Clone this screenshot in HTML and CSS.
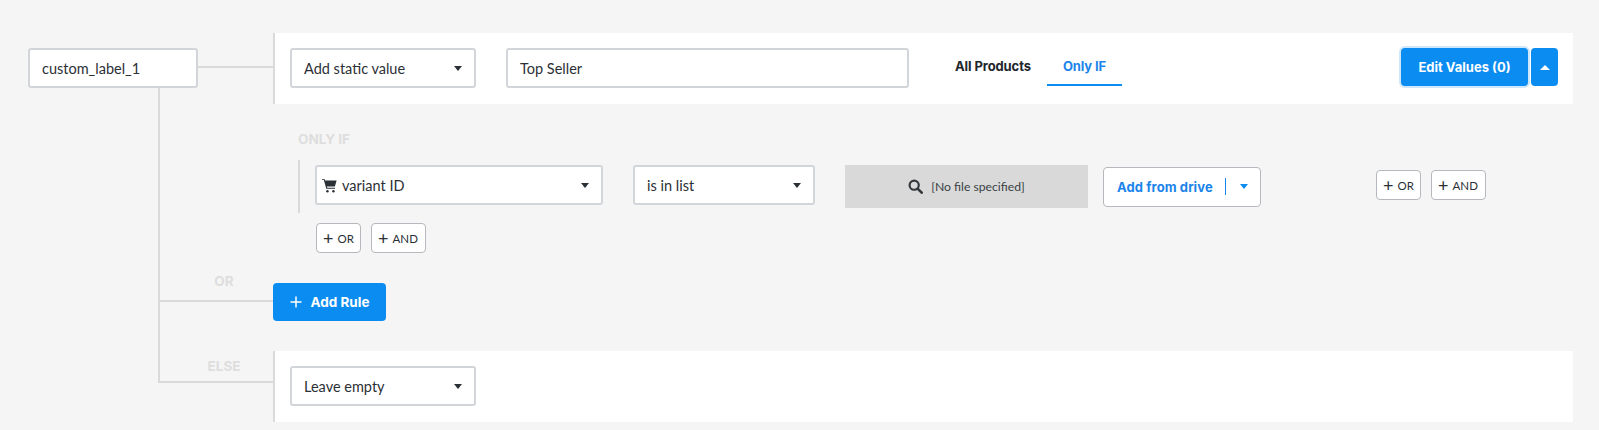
FILE: index.html
```html
<!DOCTYPE html>
<html lang="en">
<head>
<meta charset="utf-8">
<title>Rule editor</title>
<link rel="stylesheet" href="styles.css">
</head>
<body>
<main class="canvas">
  <div class="node">custom_label_1</div>
  <span class="wire wire-top"></span>
  <span class="wire wire-trunk"></span>
  <span class="wire wire-or"></span>
  <span class="wire wire-else"></span>
  <span class="side-label side-or">OR</span>
  <span class="side-label side-else">ELSE</span>

  <section class="band">
    <div class="select w-186"><span>Add static value</span><i class="caret"></i></div>
    <div class="input">Top Seller</div>
    <nav class="tabs">
      <a class="tab">All Products</a>
      <a class="tab tab-active">Only IF</a>
    </nav>
    <div class="actions">
      <button class="btn-edit">Edit Values (0)</button>
      <button class="btn-up"><i class="caret caret-up"></i></button>
    </div>
  </section>

  <section class="conditions">
    <h4 class="only-if">ONLY IF</h4>
    <div class="cond-row">
      <div class="select w-287">
        <span class="with-icon">
          <svg class="cart" viewBox="0 0 16 16" aria-hidden="true"><path d="M0 1.5h2.6l.7 1.8H15.6l-1.9 6.4H5.2l.4 1.3h8.3v1H4.6L1.9 2.5H0z"/><circle cx="5.8" cy="14.6" r="1.3"/><circle cx="12.2" cy="14.6" r="1.3"/></svg>
          variant ID
        </span>
        <i class="caret"></i>
      </div>
      <div class="select w-182"><span>is in list</span><i class="caret"></i></div>
      <div class="file">
        <svg class="search" viewBox="0 0 16 16" aria-hidden="true"><circle cx="6.6" cy="6.6" r="4.9" fill="none" stroke="currentColor" stroke-width="2.3"/><path d="M10.2 10.2l4.4 4.4" stroke="currentColor" stroke-width="2.8" stroke-linecap="round"/></svg>
        <span>[No file specified]</span>
      </div>
      <button class="btn-drive"><span>Add from drive</span><i class="divider"></i><i class="caret caret-blue"></i></button>
      <div class="logic logic-right">
        <button class="btn-logic w-or"><b>+</b>OR</button>
        <button class="btn-logic w-and"><b>+</b>AND</button>
      </div>
    </div>
    <div class="logic logic-below">
      <button class="btn-logic w-or"><b>+</b>OR</button>
      <button class="btn-logic w-and"><b>+</b>AND</button>
    </div>
  </section>

  <button class="btn-add">
    <svg class="plus" viewBox="0 0 12 12" aria-hidden="true"><path d="M6 .5v11M.5 6h11" stroke="currentColor" stroke-width="1.5" fill="none"/></svg>
    Add Rule
  </button>

  <section class="band band-else">
    <div class="select w-186"><span>Leave empty</span><i class="caret"></i></div>
  </section>
</main>
</body>
</html>
```

FILE: styles.css
```css
* { box-sizing: border-box; }
html, body { margin: 0; height: 430px; overflow: hidden; }
body { background: #f5f5f5; font-family: "Lato", "Open Sans", sans-serif; color: #2b3036; font-size: 14.5px; }
button { font-family: inherit; cursor: pointer; padding: 0; }

.canvas { position: relative; height: 430px; padding: 33px 26px 0 273px; }

.node {
  position: absolute; left: 28px; top: 48px; width: 170px; height: 40px;
  padding-left: 12px; display: flex; align-items: center;
  background: #fff; border: 2px solid #d2d6db; border-radius: 3px;
}
.wire { position: absolute; background: #dadada; }
.wire-top { left: 198px; top: 66px; width: 75px; height: 2px; }
.wire-trunk { left: 158px; top: 88px; width: 2px; height: 295px; }
.wire-or { left: 158px; top: 300px; width: 115px; height: 2px; }
.wire-else { left: 158px; top: 381px; width: 115px; height: 2px; }
.side-label { position: absolute; left: 184px; width: 80px; text-align: center; font-family: "Inter", sans-serif; font-weight: 700; font-size: 13.5px; color: #dedede; line-height: 16px; }
.side-or { top: 273px; }
.side-else { top: 358px; }

.band {
  height: 71px; background: #fff; border-left: 2px solid #dadada;
  display: flex; align-items: center; padding: 0 15px;
}
.band > .select, .band > .input { margin-bottom: 1px; }
.band-else { margin-top: 30px; }

.select {
  height: 40px; display: flex; align-items: center; justify-content: space-between;
  padding: 1px 12px 0 12px; background: #fff; border: 2px solid #d2d6db; border-radius: 3px;
}
.w-186 { width: 186px; }
.w-287 { width: 288px; padding-left: 5px; }
.w-182 { width: 182px; margin-left: 30px; }
.caret { width: 0; height: 0; border-left: 4.5px solid transparent; border-right: 4.5px solid transparent; border-top: 5px solid #2b3036; }
.caret-up { border-left-width: 5.5px; border-right-width: 5.5px; border-top: 0; border-bottom: 5.5px solid #fff; }
.caret-blue { border-top-color: #0b8cf0; }
.with-icon { display: flex; align-items: center; gap: 5px; }
.cart { width: 15px; height: 16px; fill: #2b3036; }

.input {
  width: 403px; height: 40px; margin-left: 30px; padding-left: 12px;
  display: flex; align-items: center; background: #fff; border: 2px solid #d2d6db; border-radius: 3px;
}
.tabs { display: flex; margin-left: 30px; height: 37px; margin-bottom: 2px; }
.tab { padding: 0 16px; height: 37px; line-height: 35px; white-space: nowrap; font-family: "Inter", sans-serif; font-weight: 700; font-size: 13px; letter-spacing: -.1px; color: #22262b; }
.tab-active { color: #1b84ea; border-bottom: 2px solid #0b8cf0; }
.actions { display: flex; margin-left: auto; margin-bottom: 3px; gap: 3px; align-items: flex-start; }
.btn-edit {
  width: 127px; height: 38px; border: 0; border-radius: 4px; background: #0b8cf0; color: #fff;
  font-family: "Inter", sans-serif; font-weight: 700; font-size: 13px;
  box-shadow: 0 0 0 2px #cfe7fb;
}
.btn-up { width: 27px; height: 38px; border: 0; border-radius: 4px; background: #0b8cf0; display: flex; align-items: center; justify-content: center; }

.conditions { height: 179px; padding: 27px 0 0 25px; }
.only-if { margin: 0; font-family: "Inter", sans-serif; font-weight: 700; font-size: 13.5px; line-height: 16px; color: #dedede; }
.cond-row {
  height: 53px; margin-top: 13px; padding-left: 15px; border-left: 2px solid #dadada;
  display: flex; align-items: center;
}
.cond-row > .select { margin-top: -4px; }
.file {
  width: 243px; height: 43px; margin-left: 30px; margin-top: -1px; background: #d9d9d9; color: #3a3f45;
  display: flex; align-items: center; justify-content: center; gap: 8px; font-size: 12.2px;
}
.search { width: 15px; height: 15px; color: #33383d; }
.btn-drive {
  width: 158px; height: 40px; margin-left: 15px; margin-top: 0; background: #fff; border: 1px solid #b5b9bd; border-radius: 4px;
  display: flex; align-items: center; padding: 0 13px; color: #1b84ea; white-space: nowrap;
  font-family: "Inter", sans-serif; font-weight: 700; font-size: 13px; letter-spacing: .1px;
}
.divider { flex: none; width: 1px; height: 17px; background: #1b84ea; margin: 0 14px 0 12px; }
.logic { display: flex; gap: 9.5px; }
.logic-right { margin-left: 115px; margin-top: -3px; }
.logic-below { margin: 10px 0 0 18px; }
.btn-logic {
  height: 30px; background: #fff; border: 1px solid #b5b9bd; border-radius: 4px; color: #2b3036;
  font-size: 11.5px; font-weight: 400; display: flex; align-items: center; justify-content: center; gap: 4px;
}
.btn-logic b { font-size: 18px; font-weight: 400; line-height: 1; }
.w-or { width: 45px; }
.w-and { width: 55px; }

.btn-add {
  width: 113px; height: 38px; border: 0; border-radius: 4px; background: #0b8cf0; color: #fff;
  display: flex; align-items: center; justify-content: center; gap: 9px;
  font-family: "Inter", sans-serif; font-weight: 700; font-size: 13.5px;
}
.plus { width: 12px; height: 12px; }
```
